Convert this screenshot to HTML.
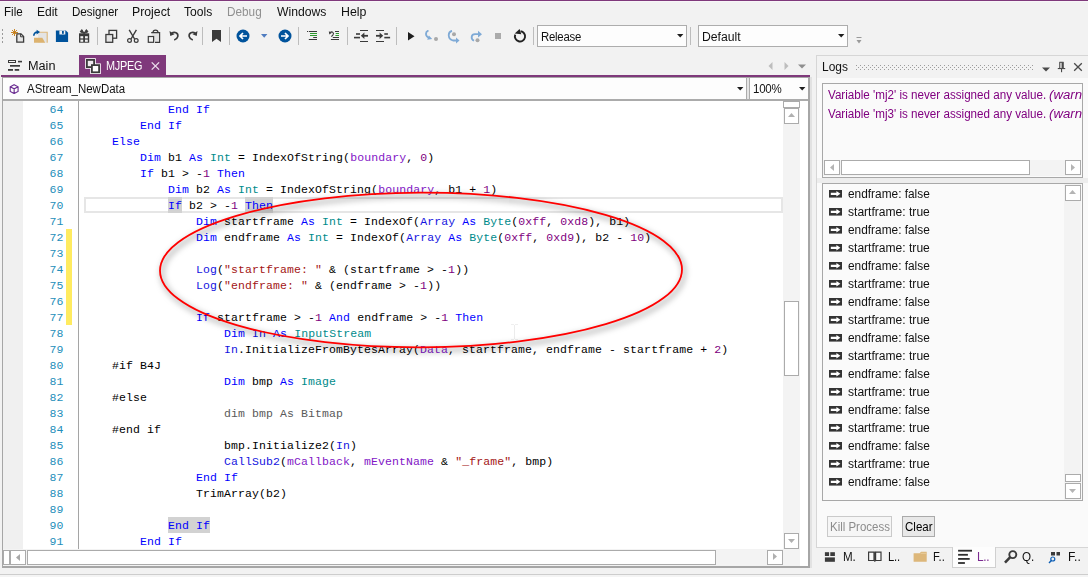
<!DOCTYPE html>
<html><head><meta charset='utf-8'><title>IDE</title><style>
html,body{margin:0;padding:0}
body{width:1088px;height:577px;position:relative;overflow:hidden;background:#F2F2F2;font-family:'Liberation Sans', sans-serif;}
.b{position:absolute;box-sizing:content-box}
.t{position:absolute;white-space:pre;transform-origin:0 0;line-height:16px;font-size:12px;font-family:'Liberation Sans', sans-serif;color:#111111}
.ln{position:absolute;left:30px;width:33.4px;text-align:right;font:11.5px/16px 'Liberation Mono', monospace;letter-spacing:0.1px;color:#238EBA;white-space:pre}
.hl{display:inline-block;height:15px;box-shadow:0 -1px 0 #D2D2D2;background:#D2D2D2;color:#0000FF;vertical-align:top}
.cl{position:absolute;left:84px;font:11.5px/16px 'Liberation Mono', monospace;letter-spacing:0.1px;color:#000;white-space:pre}
</style></head><body>
<div class='b' style="left:0px;top:0px;width:1088px;height:1px;background:#7F397B;"></div>
<div class='b' style="left:0px;top:1px;width:1088px;height:1px;background:#F8F6F8;"></div>
<div class='b' style="left:1.6px;top:29.2px;width:1.6px;height:1.6px;background:#9A9A9A;"></div>
<div class='b' style="left:1.6px;top:33.2px;width:1.6px;height:1.6px;background:#9A9A9A;"></div>
<div class='b' style="left:1.6px;top:37.2px;width:1.6px;height:1.6px;background:#9A9A9A;"></div>
<div class='b' style="left:1.6px;top:41.2px;width:1.6px;height:1.6px;background:#9A9A9A;"></div>
<div class='b' style="left:97px;top:27px;width:1px;height:18px;background:#BDBDBD;"></div>
<div class='b' style="left:202px;top:27px;width:1px;height:18px;background:#BDBDBD;"></div>
<div class='b' style="left:229px;top:27px;width:1px;height:18px;background:#BDBDBD;"></div>
<div class='b' style="left:298px;top:27px;width:1px;height:18px;background:#BDBDBD;"></div>
<div class='b' style="left:347px;top:27px;width:1px;height:18px;background:#BDBDBD;"></div>
<div class='b' style="left:396px;top:27px;width:1px;height:18px;background:#BDBDBD;"></div>
<div class='b' style="left:533px;top:27px;width:1px;height:18px;background:#BDBDBD;"></div>
<div class='b' style="left:690px;top:27px;width:1px;height:18px;background:#BDBDBD;"></div>
<svg class='b' style="left:10px;top:28px;" width='16' height='16' viewBox='0 0 16 16'><path d='M6.8 5.8h4.2l2.6 2.6v5.7H6.8z' fill='#E6E6E6' stroke='#3B3B3B' stroke-width='1.3'/><path d='M10.6 5.8v3h3' fill='none' stroke='#3B3B3B' stroke-width='1'/><g stroke='#C47A12' stroke-width='0.9'><path d='M4.5 1v7M1 4.5h7M2 2l5 5M7 2l-5 5'/></g></svg>
<svg class='b' style="left:32px;top:28px;" width='17' height='16' viewBox='0 0 17 16'><path d='M6 4.3h9.2v10.4H6z' fill='#E4E4E4'/><path d='M6 4.3h9.2v10.4' fill='none' stroke='#DDB77A' stroke-width='1.1'/><path d='M2 9.8h8.3l2.9 5H2z' fill='#DDB36F'/><path d='M1.8 7.8c0-2.6 1.6-3.7 3.6-3.7' fill='none' stroke='#00539C' stroke-width='1.6'/><path d='M4.6 1.7l3.4 2.4l-3.4 2.4z' fill='#00539C'/></svg>
<svg class='b' style="left:55px;top:29px;" width='14' height='14' viewBox='0 0 14 14'><path d='M0.9 1.5h10l2.2 2.2v9.3H0.9z' fill='#00539C'/><rect x='4.4' y='1.5' width='5.9' height='4' fill='#F2F2F2'/><rect x='7' y='2' width='1.8' height='2.8' fill='#00539C'/></svg>
<svg class='b' style="left:78px;top:28px;" width='13' height='16' viewBox='0 0 13 16'><rect x='1' y='5.3' width='10.2' height='9.4' fill='#3B3B3B'/><g fill='#F2F2F2'><rect x='2.4' y='8.2' width='2.8' height='2.2'/><rect x='7' y='8.2' width='2.8' height='2.2'/><rect x='2.4' y='11.6' width='2.8' height='2.2'/><rect x='7' y='11.6' width='2.8' height='2.2'/></g><path d='M6.1 5.3L2.2 3.8L3.8 1.6zM6.1 5.3L10 3.8L8.4 1.6z' stroke='#3B3B3B' stroke-width='1' fill='#3B3B3B'/></svg>
<svg class='b' style="left:104px;top:28px;" width='15' height='16' viewBox='0 0 15 16'><rect x='5' y='2.4' width='7.6' height='7.8' fill='#F2F2F2' stroke='#3B3B3B' stroke-width='1.3'/><rect x='1.9' y='6.5' width='6.8' height='7.8' fill='#E4E4E4' stroke='#3B3B3B' stroke-width='1.3'/></svg>
<svg class='b' style="left:126px;top:28px;" width='14' height='16' viewBox='0 0 14 16'><path d='M3.2 1.8L8.6 11M10.4 1.8L5 11' stroke='#3B3B3B' stroke-width='1.4' fill='none'/><circle cx='3.5' cy='12.5' r='1.9' fill='none' stroke='#3B3B3B' stroke-width='1.2'/><circle cx='10.2' cy='12.5' r='1.9' fill='none' stroke='#3B3B3B' stroke-width='1.2'/></svg>
<svg class='b' style="left:147px;top:28px;" width='14' height='16' viewBox='0 0 14 16'><path d='M4.2 4.6h8.4v9.7H8' fill='#E2E2E2' stroke='#3B3B3B' stroke-width='1.2'/><path d='M6 4.5c0-3.2 5-3.2 5 0' fill='none' stroke='#3B3B3B' stroke-width='1.2'/><rect x='1.3' y='8.5' width='5.3' height='5.8' fill='#F2F2F2' stroke='#3B3B3B' stroke-width='1.2'/></svg>
<svg class='b' style="left:168px;top:29px;" width='12' height='13' viewBox='0 0 12 13'><path d='M3.5 4.5c3-2.5 7-0.5 6.3 3c-0.4 1.8-1.8 2.8-3.6 3.4' fill='none' stroke='#3B3B3B' stroke-width='1.6'/><path d='M1.5 2l0.8 5l4.2-1.8z' fill='#3B3B3B'/></svg>
<svg class='b' style="left:187px;top:29px;" width='12' height='13' viewBox='0 0 12 13'><path d='M8.5 4.5c-3-2.5-7-0.5-6.3 3c0.4 1.8 1.8 2.8 3.6 3.4' fill='none' stroke='#3B3B3B' stroke-width='1.6'/><path d='M10.5 2l-0.8 5l-4.2-1.8z' fill='#3B3B3B'/></svg>
<svg class='b' style="left:212px;top:30px;" width='9' height='12' viewBox='0 0 9 12'><path d='M0 0h9v12l-4.5-3.3L0 12z' fill='#3B3B3B'/></svg>
<svg class='b' style="left:236px;top:29px;" width='14' height='14' viewBox='0 0 14 14'><circle cx='7' cy='7' r='6.5' fill='#00539C'/><path d='M11 7H4.5M7 4L4 7l3 3' fill='none' stroke='#fff' stroke-width='1.7'/></svg>
<svg class='b' style="left:261px;top:34px;" width='7' height='4' viewBox='0 0 7 4'><path d='M0 0h6.4L3.2 3.8z' fill='#4F7CC0'/></svg>
<svg class='b' style="left:278px;top:29px;" width='14' height='14' viewBox='0 0 14 14'><circle cx='7' cy='7' r='6.5' fill='#00539C'/><path d='M3 7h6.5M7 4l3 3l-3 3' fill='none' stroke='#fff' stroke-width='1.7'/></svg>
<svg class='b' style="left:306px;top:30px;" width='12' height='11' viewBox='0 0 12 11'><g fill='#3B3B3B'><rect x='1' y='1' width='1.2' height='1'/><rect x='3' y='1' width='8' height='1'/><rect x='7.2' y='7' width='3.8' height='1'/><rect x='2.8' y='9' width='8.2' height='1'/></g><g fill='#2E9A2E'><rect x='4' y='3' width='7' height='1'/><rect x='4' y='5' width='7' height='1'/></g></svg>
<svg class='b' style="left:328px;top:30px;" width='12' height='11' viewBox='0 0 12 11'><g fill='#3B3B3B'><rect x='7' y='1' width='4' height='1'/><rect x='4.8' y='7' width='6.2' height='1'/><rect x='2.9' y='9' width='8.1' height='1'/></g><g fill='#2E9A2E'><rect x='7.7' y='3' width='3.3' height='1'/><rect x='7.4' y='5' width='3.6' height='1'/></g><path d='M2 2.6c2.2-1.6 4.4 0.2 3 2.2L3.4 6.6' fill='none' stroke='#3B3B3B' stroke-width='1.1'/><path d='M0.8 1.2l0.5 3.2l2.6-1.6z' fill='#3B3B3B'/></svg>
<svg class='b' style="left:353px;top:29px;" width='16' height='14' viewBox='0 0 16 14'><g fill='#3B3B3B'><rect x='7' y='1' width='8' height='1'/><rect x='7' y='12' width='8' height='1'/><rect x='3' y='4.2' width='4' height='1.6'/><rect x='1' y='7.8' width='6' height='1.6'/></g><path d='M15 6.8H9.5' stroke='#3B3B3B' stroke-width='1.8' fill='none'/><path d='M7.8 6.8l3.6-3.2v6.4z' fill='#3B3B3B'/></svg>
<svg class='b' style="left:375px;top:29px;" width='16' height='14' viewBox='0 0 16 14'><g fill='#3B3B3B'><rect x='1' y='1' width='8' height='1'/><rect x='1' y='12' width='8' height='1'/><rect x='9.3' y='4.2' width='3.6' height='1.6'/><rect x='9.3' y='7.8' width='5.8' height='1.6'/></g><path d='M1 6.8H6.5' stroke='#3B3B3B' stroke-width='1.8' fill='none'/><path d='M8.2 6.8L4.6 3.6v6.4z' fill='#3B3B3B'/></svg>
<svg class='b' style="left:408px;top:32px;" width='7' height='9' viewBox='0 0 7 9'><path d='M0 0L6.5 4.2L0 8.4z' fill='#1E1E1E'/></svg>
<svg class='b' style="left:424px;top:30px;" width='16' height='12' viewBox='0 0 16 12'><path d='M4.5 0.5C1 2 1 6.5 5.5 8' fill='none' stroke='#7FAAD6' stroke-width='1.8'/><path d='M3.2 9.8l5-0.8l-3.3-3.6z' fill='#7FAAD6'/><circle cx='12' cy='9' r='2' fill='#A8A8A8'/></svg>
<svg class='b' style="left:447px;top:30px;" width='14' height='14' viewBox='0 0 14 14'><path d='M5 0.8C0.5 2 0.5 9 6 10.5h4' fill='none' stroke='#7FAAD6' stroke-width='1.8'/><path d='M9 7.5l3.5 3l-3.5 3z' fill='#7FAAD6'/><circle cx='7' cy='4.2' r='2' fill='#A8A8A8'/></svg>
<svg class='b' style="left:470px;top:30px;" width='13' height='13' viewBox='0 0 13 13'><path d='M9 4.2H5C1 4.2 0.5 9 4 10.8' fill='none' stroke='#7FAAD6' stroke-width='1.8'/><path d='M8 0.8l4 3.4l-4 3.4z' fill='#7FAAD6'/><circle cx='7.5' cy='10.2' r='2' fill='#A8A8A8'/></svg>
<div class='b' style="left:495px;top:33px;width:6px;height:6px;background:#ABABAB;"></div>
<svg class='b' style="left:513px;top:28px;" width='14' height='16' viewBox='0 0 14 16'><path d='M2.2 6.6A5.1 5.1 0 1 0 7.6 3.3' fill='none' stroke='#222' stroke-width='1.9'/><path d='M1.7 5.6L6.6 0.9L8.3 6.3z' fill='#222'/></svg>
<div class='b' style="left:537px;top:25px;width:148px;height:20px;background:#FDFDFD;border:1px solid #ADADAD;"></div>
<svg class='b' style="left:677px;top:34px;" width='7' height='4' viewBox='0 0 7 4'><path d='M0 0h6.4L3.2 3.6z' fill='#1E1E1E'/></svg>
<div class='b' style="left:698px;top:25px;width:148px;height:20px;background:#FDFDFD;border:1px solid #ADADAD;"></div>
<svg class='b' style="left:838px;top:34px;" width='7' height='4' viewBox='0 0 7 4'><path d='M0 0h6.4L3.2 3.6z' fill='#1E1E1E'/></svg>
<svg class='b' style="left:856px;top:37px;" width='7' height='8' viewBox='0 0 7 8'><path d='M0.5 0.5h5' stroke='#9A9A9A'/><path d='M0.5 3h5L3 6.5z' fill='#9A9A9A'/></svg>
<svg class='b' style="left:7px;top:59px;" width='16' height='13' viewBox='0 0 16 13'><rect x='1.5' y='1.5' width='7' height='2' fill='#FAFAFA' stroke='#3B3B3B' stroke-width='1'/><g fill='#3B3B3B'><rect x='11' y='1.8' width='4' height='1.6'/><rect x='3' y='6' width='10' height='1.7'/><rect x='1' y='10' width='5' height='1.8'/><rect x='7.7' y='10' width='4.5' height='1.8'/></g></svg>
<div class='b' style="left:79px;top:55px;width:87px;height:21px;background:#7F397B;"></div>
<svg class='b' style="left:85px;top:58px;" width='16' height='16' viewBox='0 0 16 16'><rect x='0.2' y='0.2' width='10.6' height='10.6' fill='#FFFFFF'/><rect x='5.2' y='5.4' width='10.6' height='10.6' fill='#FFFFFF'/><rect x='1.9' y='1.9' width='7.2' height='7.2' fill='#F0EAF0' stroke='#3B3B3B' stroke-width='1.8'/><rect x='6.9' y='7.1' width='7.2' height='7.2' fill='#FFFFFF' stroke='#3B3B3B' stroke-width='1.8'/></svg>
<svg class='b' style="left:151px;top:62px;" width='9' height='8' viewBox='0 0 9 8'><path d='M0.7 0.4l7.4 7.2M8.1 0.4L0.7 7.6' stroke='#E9DCEA' stroke-width='1.3' fill='none'/></svg>
<div class='b' style="left:1px;top:75px;width:809px;height:2px;background:#7F397B;"></div>
<svg class='b' style="left:768px;top:61.5px;" width='5' height='8' viewBox='0 0 5 8'><path d='M4.5 0v8L0.5 4z' fill='#BDBDBD'/></svg>
<svg class='b' style="left:784px;top:61.5px;" width='5' height='8' viewBox='0 0 5 8'><path d='M0.5 0v8l4-4z' fill='#BDBDBD'/></svg>
<svg class='b' style="left:798px;top:64px;" width='8' height='5' viewBox='0 0 8 5'><path d='M0 0.5h8L4 4.5z' fill='#8E8E8E'/></svg>
<div class='b' style="left:2px;top:77px;width:807.5px;height:490.6px;background:#A6A6A6;"></div>
<div class='b' style="left:3px;top:78px;width:804.6px;height:487.7px;background:#FFFFFF;"></div>
<div class='b' style="left:3px;top:78px;width:743px;height:21px;background:#FDFDFD;"></div>
<div class='b' style="left:746px;top:78px;width:4px;height:21px;background:#E4E4E4;"></div>
<div class='b' style="left:746px;top:78px;width:1px;height:21px;background:#ABABAB;"></div>
<div class='b' style="left:749px;top:78px;width:1px;height:21px;background:#ABABAB;"></div>
<div class='b' style="left:750px;top:78px;width:58px;height:21px;background:#FDFDFD;"></div>
<div class='b' style="left:3px;top:99px;width:805px;height:1.5px;background:#ABABAB;"></div>
<svg class='b' style="left:737px;top:87px;" width='7' height='4' viewBox='0 0 7 4'><path d='M0 0h6.4L3.2 3.6z' fill='#1E1E1E'/></svg>
<svg class='b' style="left:799px;top:87px;" width='7' height='4' viewBox='0 0 7 4'><path d='M0 0h6.4L3.2 3.6z' fill='#1E1E1E'/></svg>
<svg class='b' style="left:8.5px;top:83.7px;" width='10.3' height='10.3' viewBox='0 0 11 11'><path d='M5.5 0.8l4.2 2.2v5l-4.2 2.2l-4.2-2.2v-5z M1.3 3l4.2 2.2l4.2-2.2M5.5 5.2v5' fill='none' stroke='#6A2C91' stroke-width='1.2'/></svg>
<div class='b' style="left:3px;top:100.5px;width:20px;height:448.5px;background:#F0F0F0;"></div>
<div class='b' style="left:78px;top:100.5px;width:1px;height:448.5px;background:#A5A5A5;"></div>
<div class='b' style="left:66px;top:229px;width:6px;height:96px;background:#FFEB60;"></div>
<div class='b' style="left:84px;top:197px;width:699px;height:16px;background:#FFFFFF;border:2px solid #E6E6E6;box-sizing:border-box;"></div>
<div class='ln' style='top:102px'>64</div>
<div class='cl' style='top:102px'>            <span style='color:#0000FF'>End If</span></div>
<div class='ln' style='top:118px'>65</div>
<div class='cl' style='top:118px'>        <span style='color:#0000FF'>End If</span></div>
<div class='ln' style='top:134px'>66</div>
<div class='cl' style='top:134px'>    <span style='color:#0000FF'>Else</span></div>
<div class='ln' style='top:150px'>67</div>
<div class='cl' style='top:150px'>        <span style='color:#0000FF'>Dim</span> b1 <span style='color:#0000FF'>As</span> <span style='color:#008B8B'>Int</span> = IndexOfString(<span style='color:#8216C6'>boundary</span>, <span style='color:#800080'>0</span>)</div>
<div class='ln' style='top:166px'>68</div>
<div class='cl' style='top:166px'>        <span style='color:#0000FF'>If</span> b1 &gt; -<span style='color:#800080'>1</span> <span style='color:#0000FF'>Then</span></div>
<div class='ln' style='top:182px'>69</div>
<div class='cl' style='top:182px'>            <span style='color:#0000FF'>Dim</span> b2 <span style='color:#0000FF'>As</span> <span style='color:#008B8B'>Int</span> = IndexOfString(<span style='color:#8216C6'>boundary</span>, b1 + <span style='color:#800080'>1</span>)</div>
<div class='ln' style='top:198px'>70</div>
<div class='cl' style='top:198px'>            <span class='hl'>If</span> b2 &gt; -<span style='color:#800080'>1</span> <span class='hl'>Then</span></div>
<div class='ln' style='top:214px'>71</div>
<div class='cl' style='top:214px'>                <span style='color:#0000FF'>Dim</span> startframe <span style='color:#0000FF'>As</span> <span style='color:#008B8B'>Int</span> = IndexOf(<span style='color:#1414E0'>Array</span> <span style='color:#0000FF'>As</span> <span style='color:#008B8B'>Byte</span>(<span style='color:#800080'>0xff</span>, <span style='color:#800080'>0xd8</span>), b1)</div>
<div class='ln' style='top:230px'>72</div>
<div class='cl' style='top:230px'>                <span style='color:#0000FF'>Dim</span> endframe <span style='color:#0000FF'>As</span> <span style='color:#008B8B'>Int</span> = IndexOf(<span style='color:#1414E0'>Array</span> <span style='color:#0000FF'>As</span> <span style='color:#008B8B'>Byte</span>(<span style='color:#800080'>0xff</span>, <span style='color:#800080'>0xd9</span>), b2 - <span style='color:#800080'>10</span>)</div>
<div class='ln' style='top:246px'>73</div>
<div class='ln' style='top:262px'>74</div>
<div class='cl' style='top:262px'>                <span style='color:#1414E0'>Log</span>(<span style='color:#A31515'>&quot;startframe: &quot;</span> &amp; (startframe &gt; -<span style='color:#800080'>1</span>))</div>
<div class='ln' style='top:278px'>75</div>
<div class='cl' style='top:278px'>                <span style='color:#1414E0'>Log</span>(<span style='color:#A31515'>&quot;endframe: &quot;</span> &amp; (endframe &gt; -<span style='color:#800080'>1</span>))</div>
<div class='ln' style='top:294px'>76</div>
<div class='ln' style='top:310px'>77</div>
<div class='cl' style='top:310px'>                <span style='color:#0000FF'>If</span> startframe &gt; -<span style='color:#800080'>1</span> <span style='color:#0000FF'>And</span> endframe &gt; -<span style='color:#800080'>1</span> <span style='color:#0000FF'>Then</span></div>
<div class='ln' style='top:326px'>78</div>
<div class='cl' style='top:326px'>                    <span style='color:#0000FF'>Dim</span> <span style='color:#1414E0'>In</span> <span style='color:#0000FF'>As</span> <span style='color:#008B8B'>InputStream</span></div>
<div class='ln' style='top:342px'>79</div>
<div class='cl' style='top:342px'>                    <span style='color:#1414E0'>In</span>.InitializeFromBytesArray(<span style='color:#8216C6'>Data</span>, startframe, endframe - startframe + <span style='color:#800080'>2</span>)</div>
<div class='ln' style='top:358px'>80</div>
<div class='cl' style='top:358px'>    #if B4J</div>
<div class='ln' style='top:374px'>81</div>
<div class='cl' style='top:374px'>                    <span style='color:#0000FF'>Dim</span> bmp <span style='color:#0000FF'>As</span> <span style='color:#008B8B'>Image</span></div>
<div class='ln' style='top:390px'>82</div>
<div class='cl' style='top:390px'>    #else</div>
<div class='ln' style='top:406px'>83</div>
<div class='cl' style='top:406px'>                    <span style='color:#5A5A5A'>dim bmp As Bitmap</span></div>
<div class='ln' style='top:422px'>84</div>
<div class='cl' style='top:422px'>    #end if</div>
<div class='ln' style='top:438px'>85</div>
<div class='cl' style='top:438px'>                    bmp.Initialize2(<span style='color:#1414E0'>In</span>)</div>
<div class='ln' style='top:454px'>86</div>
<div class='cl' style='top:454px'>                    <span style='color:#1414E0'>CallSub2</span>(<span style='color:#8216C6'>mCallback</span>, <span style='color:#8216C6'>mEventName</span> &amp; <span style='color:#A31515'>&quot;_frame&quot;</span>, bmp)</div>
<div class='ln' style='top:470px'>87</div>
<div class='cl' style='top:470px'>                <span style='color:#0000FF'>End If</span></div>
<div class='ln' style='top:486px'>88</div>
<div class='cl' style='top:486px'>                TrimArray(b2)</div>
<div class='ln' style='top:502px'>89</div>
<div class='ln' style='top:518px'>90</div>
<div class='cl' style='top:518px'>            <span class='hl'>End If</span></div>
<div class='ln' style='top:534px'>91</div>
<div class='cl' style='top:534px'>        <span style='color:#0000FF'>End If</span></div>
<div class='b' style="left:783px;top:100.5px;width:17px;height:465.2px;background:#F3F3F3;"></div>
<div class='b' style="left:783px;top:101px;width:15px;height:5px;background:#FFFFFF;border:1px solid #ABABAB;"></div>
<div class='b' style="left:784px;top:108px;width:13px;height:14px;background:#FFFFFF;border:1px solid #ABABAB;"></div>
<svg class='b' style="left:788px;top:113px;" width='7' height='4' viewBox='0 0 7 4'><path d='M0 4h7L3.5 0z' fill='#B0B0B0'/></svg>
<div class='b' style="left:784px;top:300.6px;width:13px;height:73.4px;background:#FFFFFF;border:1px solid #ABABAB;"></div>
<div class='b' style="left:784px;top:533px;width:13px;height:14px;background:#FFFFFF;border:1px solid #ABABAB;"></div>
<svg class='b' style="left:788px;top:539px;" width='7' height='4' viewBox='0 0 7 4'><path d='M0 0h7L3.5 4z' fill='#B0B0B0'/></svg>
<div class='b' style="left:3px;top:549px;width:780px;height:16.7px;background:#F3F3F3;"></div>
<div class='b' style="left:3px;top:549.5px;width:5px;height:13.5px;background:#FFFFFF;border:1px solid #ABABAB;"></div>
<div class='b' style="left:10px;top:549.5px;width:14px;height:13.5px;background:#FFFFFF;border:1px solid #ABABAB;"></div>
<svg class='b' style="left:16px;top:553.5px;" width='4' height='7' viewBox='0 0 4 7'><path d='M4 0v7L0 3.5z' fill='#A8A8A8'/></svg>
<div class='b' style="left:27px;top:549.5px;width:687px;height:13.5px;background:#FFFFFF;border:1px solid #ABABAB;"></div>
<div class='b' style="left:767px;top:549.5px;width:14px;height:13.5px;background:#FFFFFF;border:1px solid #ABABAB;"></div>
<svg class='b' style="left:773px;top:553px;" width='4' height='7' viewBox='0 0 4 7'><path d='M0 0v7l4-3.5z' fill='#B0B0B0'/></svg>
<div class='b' style="left:514px;top:325px;width:1px;height:14px;background:#ECECEC;"></div>
<div class='b' style="left:511px;top:324px;width:3px;height:1px;background:#EFEFEF;"></div>
<div class='b' style="left:515px;top:324px;width:3px;height:1px;background:#EFEFEF;"></div>
<div class='b' style="left:511px;top:339px;width:3px;height:1px;background:#EFEFEF;"></div>
<div class='b' style="left:515px;top:339px;width:3px;height:1px;background:#EFEFEF;"></div>
<svg class='b' style='left:140px;top:170px;filter:drop-shadow(2.5px 3px 3px rgba(0,0,0,0.6))' width='570' height='200' viewBox='140 170 570 200'><ellipse cx='421' cy='270' rx='261' ry='77.3' fill='none' stroke='#FF0000' stroke-width='1.8' transform='rotate(-0.15 421 270)'/></svg>
<div class='b' style="left:809.5px;top:77px;width:2px;height:490.6px;background:#E2E2E2;"></div>
<div class='b' style="left:816px;top:55px;width:273px;height:493px;background:#FAFAFA;border:1px solid #D6D6D6;box-sizing:border-box;"></div>
<div class='b' style="left:817px;top:56px;width:271px;height:22px;background:#F2F2F2;"></div>
<svg class='b' style='left:856px;top:65px' width='178' height='5'><defs><pattern id='gp' width='4' height='4' patternUnits='userSpaceOnUse'><rect x='0' y='0' width='1' height='1' fill='#9C9C9C'/><rect x='2' y='2' width='1' height='1' fill='#9C9C9C'/></pattern></defs><rect width='178' height='5' fill='url(#gp)'/></svg>
<svg class='b' style="left:1042px;top:66.5px;" width='8' height='5' viewBox='0 0 8 5'><path d='M0 0.4h8L4 4.4z' fill='#4A4A4A'/></svg>
<svg class='b' style="left:1057px;top:61px;" width='9' height='12' viewBox='0 0 9 12'><path d='M2.4 1.3h4.2' stroke='#4A4A4A' stroke-width='1.1' fill='none'/><rect x='2.2' y='1.3' width='1.1' height='6' fill='#4A4A4A'/><rect x='4.6' y='1.3' width='2.2' height='6' fill='#4A4A4A'/><rect x='0.8' y='7' width='7.4' height='1.1' fill='#4A4A4A'/><rect x='4' y='8' width='1.1' height='3.2' fill='#4A4A4A'/></svg>
<svg class='b' style="left:1073px;top:62px;" width='10' height='10' viewBox='0 0 10 10'><path d='M1.2 1.2l7.6 7.6M8.8 1.2l-7.6 7.6' stroke='#4A4A4A' stroke-width='1.3' fill='none'/></svg>
<div class='b' style="left:822px;top:83px;width:259px;height:93px;background:#FAFAFA;border:1px solid #A8A8A8;"></div>
<div class='t' style='left:1048.6px;top:87.4px;width:33.4px;overflow:hidden;color:#800080;font-style:italic;'><span style='display:inline-block;transform:scaleX(1.1);transform-origin:0 0'>(warning #11)</span></div>
<div class='t' style='left:1048.6px;top:106px;width:33.4px;overflow:hidden;color:#800080;font-style:italic;'><span style='display:inline-block;transform:scaleX(1.1);transform-origin:0 0'>(warning #11)</span></div>
<div class='b' style="left:823px;top:160px;width:258px;height:16px;background:#F3F3F3;"></div>
<div class='b' style="left:824px;top:160px;width:14px;height:13px;background:#FFFFFF;border:1px solid #ABABAB;"></div>
<svg class='b' style="left:830px;top:164px;" width='4' height='7' viewBox='0 0 4 7'><path d='M4 0v7L0 3.5z' fill='#B4B4B4'/></svg>
<div class='b' style="left:841px;top:160px;width:187px;height:13px;background:#FFFFFF;border:1px solid #ABABAB;"></div>
<div class='b' style="left:1065px;top:160px;width:14px;height:13px;background:#FFFFFF;border:1px solid #ABABAB;"></div>
<svg class='b' style="left:1071px;top:164px;" width='4' height='7' viewBox='0 0 4 7'><path d='M0 0v7l4-3.5z' fill='#B4B4B4'/></svg>
<div class='b' style="left:817px;top:178px;width:271px;height:4.5px;background:#EDEDED;"></div>
<div class='b' style="left:822px;top:183px;width:259px;height:316px;background:#FAFAFA;border:1px solid #A8A8A8;"></div>
<div class='b' style="left:1064px;top:184px;width:17px;height:315.5px;background:#F3F3F3;"></div>
<div class='b' style="left:1065px;top:185px;width:14px;height:14px;background:#FFFFFF;border:1px solid #ABABAB;"></div>
<svg class='b' style="left:1069px;top:190px;" width='7' height='4' viewBox='0 0 7 4'><path d='M0 4h7L3.5 0z' fill='#B4B4B4'/></svg>
<div class='b' style="left:1065px;top:474px;width:14px;height:6px;background:#FFFFFF;border:1px solid #ABABAB;"></div>
<div class='b' style="left:1065px;top:483px;width:14px;height:14px;background:#FFFFFF;border:1px solid #ABABAB;"></div>
<svg class='b' style="left:1069px;top:489px;" width='7' height='4' viewBox='0 0 7 4'><path d='M0 0h7L3.5 4z' fill='#B4B4B4'/></svg>
<svg class='b' style="left:829px;top:190.4px;" width='13' height='7.6' viewBox='0 0 13 7.6'><rect width='13' height='7.6' fill='#333333'/><path d='M1.8 2.8h5.6V1l4 2.8l-4 2.8V4.9H1.8z' fill='#fff'/></svg>
<svg class='b' style="left:829px;top:208.4px;" width='13' height='7.6' viewBox='0 0 13 7.6'><rect width='13' height='7.6' fill='#333333'/><path d='M1.8 2.8h5.6V1l4 2.8l-4 2.8V4.9H1.8z' fill='#fff'/></svg>
<svg class='b' style="left:829px;top:226.4px;" width='13' height='7.6' viewBox='0 0 13 7.6'><rect width='13' height='7.6' fill='#333333'/><path d='M1.8 2.8h5.6V1l4 2.8l-4 2.8V4.9H1.8z' fill='#fff'/></svg>
<svg class='b' style="left:829px;top:244.4px;" width='13' height='7.6' viewBox='0 0 13 7.6'><rect width='13' height='7.6' fill='#333333'/><path d='M1.8 2.8h5.6V1l4 2.8l-4 2.8V4.9H1.8z' fill='#fff'/></svg>
<svg class='b' style="left:829px;top:262.4px;" width='13' height='7.6' viewBox='0 0 13 7.6'><rect width='13' height='7.6' fill='#333333'/><path d='M1.8 2.8h5.6V1l4 2.8l-4 2.8V4.9H1.8z' fill='#fff'/></svg>
<svg class='b' style="left:829px;top:280.4px;" width='13' height='7.6' viewBox='0 0 13 7.6'><rect width='13' height='7.6' fill='#333333'/><path d='M1.8 2.8h5.6V1l4 2.8l-4 2.8V4.9H1.8z' fill='#fff'/></svg>
<svg class='b' style="left:829px;top:298.4px;" width='13' height='7.6' viewBox='0 0 13 7.6'><rect width='13' height='7.6' fill='#333333'/><path d='M1.8 2.8h5.6V1l4 2.8l-4 2.8V4.9H1.8z' fill='#fff'/></svg>
<svg class='b' style="left:829px;top:316.4px;" width='13' height='7.6' viewBox='0 0 13 7.6'><rect width='13' height='7.6' fill='#333333'/><path d='M1.8 2.8h5.6V1l4 2.8l-4 2.8V4.9H1.8z' fill='#fff'/></svg>
<svg class='b' style="left:829px;top:334.4px;" width='13' height='7.6' viewBox='0 0 13 7.6'><rect width='13' height='7.6' fill='#333333'/><path d='M1.8 2.8h5.6V1l4 2.8l-4 2.8V4.9H1.8z' fill='#fff'/></svg>
<svg class='b' style="left:829px;top:352.4px;" width='13' height='7.6' viewBox='0 0 13 7.6'><rect width='13' height='7.6' fill='#333333'/><path d='M1.8 2.8h5.6V1l4 2.8l-4 2.8V4.9H1.8z' fill='#fff'/></svg>
<svg class='b' style="left:829px;top:370.4px;" width='13' height='7.6' viewBox='0 0 13 7.6'><rect width='13' height='7.6' fill='#333333'/><path d='M1.8 2.8h5.6V1l4 2.8l-4 2.8V4.9H1.8z' fill='#fff'/></svg>
<svg class='b' style="left:829px;top:388.4px;" width='13' height='7.6' viewBox='0 0 13 7.6'><rect width='13' height='7.6' fill='#333333'/><path d='M1.8 2.8h5.6V1l4 2.8l-4 2.8V4.9H1.8z' fill='#fff'/></svg>
<svg class='b' style="left:829px;top:406.4px;" width='13' height='7.6' viewBox='0 0 13 7.6'><rect width='13' height='7.6' fill='#333333'/><path d='M1.8 2.8h5.6V1l4 2.8l-4 2.8V4.9H1.8z' fill='#fff'/></svg>
<svg class='b' style="left:829px;top:424.4px;" width='13' height='7.6' viewBox='0 0 13 7.6'><rect width='13' height='7.6' fill='#333333'/><path d='M1.8 2.8h5.6V1l4 2.8l-4 2.8V4.9H1.8z' fill='#fff'/></svg>
<svg class='b' style="left:829px;top:442.4px;" width='13' height='7.6' viewBox='0 0 13 7.6'><rect width='13' height='7.6' fill='#333333'/><path d='M1.8 2.8h5.6V1l4 2.8l-4 2.8V4.9H1.8z' fill='#fff'/></svg>
<svg class='b' style="left:829px;top:460.4px;" width='13' height='7.6' viewBox='0 0 13 7.6'><rect width='13' height='7.6' fill='#333333'/><path d='M1.8 2.8h5.6V1l4 2.8l-4 2.8V4.9H1.8z' fill='#fff'/></svg>
<svg class='b' style="left:829px;top:478.4px;" width='13' height='7.6' viewBox='0 0 13 7.6'><rect width='13' height='7.6' fill='#333333'/><path d='M1.8 2.8h5.6V1l4 2.8l-4 2.8V4.9H1.8z' fill='#fff'/></svg>
<div class='b' style="left:827px;top:516px;width:62.8px;height:19px;background:#F6F6F6;border:1px solid #CACACA;"></div>
<div class='b' style="left:902px;top:516px;width:31px;height:19px;background:#E8E8E8;border:1px solid #AAAAAA;"></div>
<div class='b' style="left:951.5px;top:546.6px;width:42.5px;height:20px;background:#FDFDFD;border:1px solid #D0D0D0;border-top:none;"></div>
<svg class='b' style="left:824px;top:551px;" width='12' height='12' viewBox='0 0 12 12'><rect x='0.9' y='1.2' width='4.2' height='3.8' fill='#3B3B3B'/><rect x='6.3' y='1.2' width='4.6' height='3.8' fill='#3B3B3B'/><rect x='0.9' y='6.4' width='10' height='4.4' fill='#3B3B3B'/></svg>
<svg class='b' style="left:867px;top:551px;" width='16' height='12' viewBox='0 0 16 12'><path d='M1.6 1.2h5.4v8.3H1.6zM8.6 1.2h5.4v8.3H8.6z' fill='#FAFAFA' stroke='#3B3B3B' stroke-width='1.2'/><path d='M7.8 0.8v10' stroke='#3B3B3B' stroke-width='1.3'/></svg>
<svg class='b' style="left:913px;top:551px;" width='15' height='12' viewBox='0 0 15 12'><path d='M0.6 2.3h6l1.5-1.6h5.6v10H0.6z' fill='#DDB77A'/><path d='M7.6 2.3h5.5' stroke='#EBD3A8' stroke-width='0.8'/></svg>
<svg class='b' style="left:958px;top:549px;" width='15' height='16' viewBox='0 0 15 16'><g fill='#2E2E2E'><rect x='0.1' y='0.8' width='13.9' height='1.8'/><rect x='0.1' y='4.9' width='9.8' height='1.8'/><rect x='0.1' y='9' width='11.6' height='1.8'/><rect x='0.1' y='13.1' width='6.8' height='1.8'/></g></svg>
<svg class='b' style="left:1003px;top:550px;" width='15' height='14' viewBox='0 0 15 14'><circle cx='9.8' cy='4.6' r='3.5' fill='none' stroke='#3B3B3B' stroke-width='1.9'/><path d='M7.2 7.2L2 12.6' stroke='#3B3B3B' stroke-width='2.6'/></svg>
<svg class='b' style="left:1048px;top:551px;" width='13' height='13' viewBox='0 0 13 13'><rect x='3' y='1' width='4' height='3.5' fill='#3B3B3B'/><rect x='8.5' y='1' width='3.5' height='3.5' fill='#3B3B3B'/><circle cx='4.8' cy='8' r='2' fill='none' stroke='#0E5FB5' stroke-width='1.2'/><path d='M3.3 9.6L1 12' stroke='#0E5FB5' stroke-width='1.4'/></svg>
<div class='b' style="left:0px;top:574px;width:1088px;height:1px;background:#CDCDCD;"></div>
<div class='b' style="left:0px;top:575px;width:1088px;height:2px;background:#F4F4F4;"></div>
<div class='t' style="left:3.90px;top:3.84px;font-size:12px;color:#111111;transform:scaleX(0.9667);">File</div>
<div class='t' style="left:36.90px;top:3.84px;font-size:12px;color:#111111;transform:scaleX(1.0006);">Edit</div>
<div class='t' style="left:71.90px;top:3.84px;font-size:12px;color:#111111;transform:scaleX(0.9619);">Designer</div>
<div class='t' style="left:132.40px;top:3.84px;font-size:12px;color:#111111;transform:scaleX(1.0225);">Project</div>
<div class='t' style="left:184.40px;top:3.84px;font-size:12px;color:#111111;transform:scaleX(1.0066);">Tools</div>
<div class='t' style="left:226.90px;top:3.84px;font-size:12px;color:#909090;transform:scaleX(0.9809);">Debug</div>
<div class='t' style="left:276.90px;top:3.84px;font-size:12px;color:#111111;transform:scaleX(1.0157);">Windows</div>
<div class='t' style="left:340.90px;top:3.84px;font-size:12px;color:#111111;transform:scaleX(1.0309);">Help</div>
<div class='t' style="left:540.70px;top:28.84px;font-size:12px;color:#111111;letter-spacing:-0.25px;transform:scaleX(0.9484);">Release</div>
<div class='t' style="left:701.90px;top:28.84px;font-size:12px;color:#111111;transform:scaleX(1.0176);">Default</div>
<div class='t' style="left:27.50px;top:57.84px;font-size:12px;color:#111111;transform:scaleX(1.0571);">Main</div>
<div class='t' style="left:105.90px;top:57.84px;font-size:12px;color:#FFFFFF;letter-spacing:-0.25px;transform:scaleX(0.9054);">MJPEG</div>
<div class='t' style="left:26.60px;top:80.84px;font-size:12px;color:#111111;transform:scaleX(0.9550);">AStream_NewData</div>
<div class='t' style="left:753.10px;top:80.84px;font-size:12px;color:#111111;letter-spacing:-0.25px;transform:scaleX(0.9595);">100%</div>
<div class='t' style="left:821.70px;top:58.84px;font-size:12px;color:#111111;transform:scaleX(0.9950);">Logs</div>
<div class='t' style="left:827.70px;top:87.24px;font-size:12px;color:#800080;transform:scaleX(0.9695);">Variable &#x27;mj2&#x27; is never assigned any value.</div>
<div class='t' style="left:827.70px;top:105.84px;font-size:12px;color:#800080;transform:scaleX(0.9695);">Variable &#x27;mj3&#x27; is never assigned any value.</div>
<div class='t' style="left:847.80px;top:185.64px;font-size:12px;color:#111111;transform:scaleX(0.9889);">endframe: false</div>
<div class='t' style="left:847.80px;top:203.64px;font-size:12px;color:#111111;transform:scaleX(1.0054);">startframe: true</div>
<div class='t' style="left:847.80px;top:221.64px;font-size:12px;color:#111111;transform:scaleX(0.9889);">endframe: false</div>
<div class='t' style="left:847.80px;top:239.64px;font-size:12px;color:#111111;transform:scaleX(1.0054);">startframe: true</div>
<div class='t' style="left:847.80px;top:257.64px;font-size:12px;color:#111111;transform:scaleX(0.9889);">endframe: false</div>
<div class='t' style="left:847.80px;top:275.64px;font-size:12px;color:#111111;transform:scaleX(1.0054);">startframe: true</div>
<div class='t' style="left:847.80px;top:293.64px;font-size:12px;color:#111111;transform:scaleX(0.9889);">endframe: false</div>
<div class='t' style="left:847.80px;top:311.64px;font-size:12px;color:#111111;transform:scaleX(1.0054);">startframe: true</div>
<div class='t' style="left:847.80px;top:329.64px;font-size:12px;color:#111111;transform:scaleX(0.9889);">endframe: false</div>
<div class='t' style="left:847.80px;top:347.64px;font-size:12px;color:#111111;transform:scaleX(1.0054);">startframe: true</div>
<div class='t' style="left:847.80px;top:365.64px;font-size:12px;color:#111111;transform:scaleX(0.9889);">endframe: false</div>
<div class='t' style="left:847.80px;top:383.64px;font-size:12px;color:#111111;transform:scaleX(1.0054);">startframe: true</div>
<div class='t' style="left:847.80px;top:401.64px;font-size:12px;color:#111111;transform:scaleX(0.9889);">endframe: false</div>
<div class='t' style="left:847.80px;top:419.64px;font-size:12px;color:#111111;transform:scaleX(1.0054);">startframe: true</div>
<div class='t' style="left:847.80px;top:437.64px;font-size:12px;color:#111111;transform:scaleX(0.9889);">endframe: false</div>
<div class='t' style="left:847.80px;top:455.64px;font-size:12px;color:#111111;transform:scaleX(1.0054);">startframe: true</div>
<div class='t' style="left:847.80px;top:473.64px;font-size:12px;color:#111111;transform:scaleX(0.9889);">endframe: false</div>
<div class='t' style="left:829.90px;top:518.64px;font-size:12px;color:#8C8C8C;transform:scaleX(0.9555);">Kill Process</div>
<div class='t' style="left:905.10px;top:518.64px;font-size:12px;color:#000;transform:scaleX(0.9621);">Clear</div>
<div class='t' style="left:842.80px;top:548.54px;font-size:12px;color:#111111;letter-spacing:-0.25px;transform:scaleX(0.9655);">M.</div>
<div class='t' style="left:888.10px;top:548.54px;font-size:12px;color:#111111;letter-spacing:-0.25px;transform:scaleX(0.9370);">L..</div>
<div class='t' style="left:932.80px;top:548.54px;font-size:12px;color:#111111;transform:scaleX(0.9312);">F..</div>
<div class='t' style="left:977.20px;top:548.54px;font-size:12px;color:#7B2A90;letter-spacing:-0.25px;transform:scaleX(0.9846);">L..</div>
<div class='t' style="left:1022.30px;top:548.54px;font-size:12px;color:#111111;transform:scaleX(0.9707);">Q.</div>
<div class='t' style="left:1067.80px;top:548.54px;font-size:12px;color:#111111;transform:scaleX(1.0101);">F..</div>
</body></html>
